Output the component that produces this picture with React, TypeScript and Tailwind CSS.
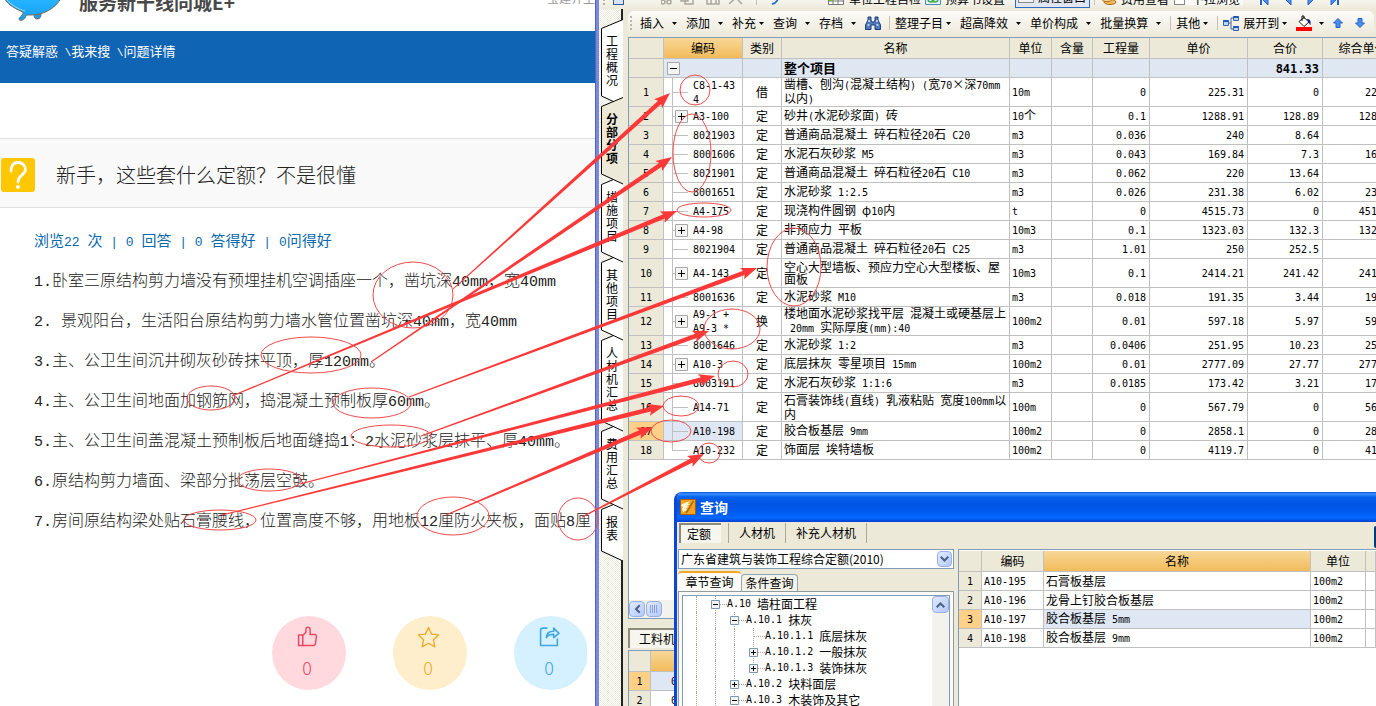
import clsx from "clsx";
import type { ReactNode } from "react";

type BudgetRow = {
  code: string;
  kind: string;
  name: string;
  unit: string;
  qty: string;
  price: string;
  total: string;
  composite: string;
  branch?: boolean;
  tall?: boolean;
};

const budgetRows: BudgetRow[] = [
  { code: "C8-1-43\n4", kind: "借", name: "凿槽、刨沟(混凝土结构) (宽70×深70mm\n以内)", unit: "10m", qty: "0", price: "225.31", total: "0", composite: "225.31", tall: true },
  { code: "A3-100", kind: "定", name: "砂井(水泥砂浆面) 砖", unit: "10个", qty: "0.1", price: "1288.91", total: "128.89", composite: "1288.91", branch: true },
  { code: "8021903", kind: "定", name: "普通商品混凝土 碎石粒径20石 C20", unit: "m3", qty: "0.036", price: "240", total: "8.64", composite: "" },
  { code: "8001606", kind: "定", name: "水泥石灰砂浆 M5", unit: "m3", qty: "0.043", price: "169.84", total: "7.3", composite: "169.84" },
  { code: "8021901", kind: "定", name: "普通商品混凝土 碎石粒径20石 C10", unit: "m3", qty: "0.062", price: "220", total: "13.64", composite: "" },
  { code: "8001651", kind: "定", name: "水泥砂浆 1:2.5", unit: "m3", qty: "0.026", price: "231.38", total: "6.02", composite: "231.38" },
  { code: "A4-175", kind: "定", name: "现浇构件圆钢 φ10内", unit: "t", qty: "0", price: "4515.73", total: "0", composite: "4515.73" },
  { code: "A4-98", kind: "定", name: "非预应力 平板", unit: "10m3", qty: "0.1", price: "1323.03", total: "132.3", composite: "1323.03", branch: true },
  { code: "8021904", kind: "定", name: "普通商品混凝土 碎石粒径20石 C25", unit: "m3", qty: "1.01", price: "250", total: "252.5", composite: "" },
  { code: "A4-143", kind: "定", name: "空心大型墙板、预应力空心大型楼板、屋\n面板", unit: "10m3", qty: "0.1", price: "2414.21", total: "241.42", composite: "2414.21", branch: true, tall: true },
  { code: "8001636", kind: "定", name: "水泥砂浆 M10", unit: "m3", qty: "0.018", price: "191.35", total: "3.44", composite: "191.35" },
  { code: "A9-1 +\nA9-3 *", kind: "换", name: "楼地面水泥砂浆找平层 混凝土或硬基层上\n 20mm 实际厚度(mm):40", unit: "100m2", qty: "0.01", price: "597.18", total: "5.97", composite: "597.18", branch: true, tall: true },
  { code: "8001646", kind: "定", name: "水泥砂浆 1:2", unit: "m3", qty: "0.0406", price: "251.95", total: "10.23", composite: "251.95" },
  { code: "A10-3", kind: "定", name: "底层抹灰 零星项目 15mm", unit: "100m2", qty: "0.01", price: "2777.09", total: "27.77", composite: "2777.09", branch: true },
  { code: "8003191", kind: "定", name: "水泥石灰砂浆 1:1:6", unit: "m3", qty: "0.0185", price: "173.42", total: "3.21", composite: "173.42" },
  { code: "A14-71", kind: "定", name: "石膏装饰线(直线) 乳液粘贴 宽度100mm以\n内", unit: "100m", qty: "0", price: "567.79", total: "0", composite: "567.79", tall: true },
  { code: "A10-198", kind: "定", name: "胶合板基层 9mm", unit: "100m2", qty: "0", price: "2858.1", total: "0", composite: "2858.1" },
  { code: "A10-232", kind: "定", name: "饰面层 埃特墙板", unit: "100m2", qty: "0", price: "4119.7", total: "0", composite: "4119.7" },
];

const quotaRows = [
  { code: "A10-195", name: "石膏板基层" },
  { code: "A10-196", name: "龙骨上钉胶合板基层" },
  { code: "A10-197", name: "胶合板基层 5mm" },
  { code: "A10-198", name: "胶合板基层 9mm" },
];

const questionLines = [
  "1.卧室三原结构剪力墙没有预埋挂机空调插座一个，凿坑深40mm，宽40mm",
  "2. 景观阳台，生活阳台原结构剪力墙水管位置凿坑深40mm，宽40mm",
  "3.主、公卫生间沉井砌灰砂砖抹平顶，厚120mm。",
  "4.主、公卫生间地面加钢筋网，捣混凝土预制板厚60mm。",
  "5.主、公卫生间盖混凝土预制板后地面缝捣1：2水泥砂浆层抹平、厚40mm。",
  "6.原结构剪力墙面、梁部分批荡层空鼓。",
  "7.房间原结构梁处贴石膏腰线，位置高度不够，用地板12厘防火夹板，面贴8厘",
];

const sideTabs = ["工程概况", "分部分项", "措施项目", "其他项目", "人材机汇总", "费用汇总", "报表"];

const treeNodes = [
  { depth: 0, mark: "-", label: "A.10 墙柱面工程" },
  { depth: 1, mark: "-", label: "A.10.1 抹灰" },
  { depth: 2, mark: "", label: "A.10.1.1 底层抹灰" },
  { depth: 2, mark: "+", label: "A.10.1.2 一般抹灰" },
  { depth: 2, mark: "+", label: "A.10.1.3 装饰抹灰" },
  { depth: 1, mark: "+", label: "A.10.2 块料面层" },
  { depth: 1, mark: "-", label: "A.10.3 木装饰及其它" },
];

const arrows = [
  [453, 289, 670, 93],
  [371, 362, 672, 157],
  [232, 396, 677, 211],
  [409, 397, 757, 268],
  [421, 436, 709, 331],
  [300, 484, 715, 376],
  [222, 515, 664, 406],
  [446, 515, 653, 427],
  [582, 517, 704, 454],
];

const ellipses = [
  [413, 295, 40, 33],
  [311, 355, 50, 18],
  [211, 398, 24, 12],
  [372, 403, 39, 15],
  [391, 436, 40, 11],
  [269, 480, 32, 11],
  [220, 520, 36, 10],
  [453, 516, 36, 19],
  [578, 519, 20, 21],
  [695, 90, 15, 15],
  [692, 153, 19, 39],
  [704, 210, 27, 7],
  [794, 267, 27, 39],
  [732, 329, 28, 20],
  [733, 374, 15, 13],
  [681, 406, 18, 10],
  [671, 431, 20, 11],
  [709, 453, 11, 10],
];

// Latin runs are set in a half-width face so they line up with the CJK grid
function Mixed({ text, latin = "font-['DejaVu_Sans_Mono',monospace] text-[10px]" }: { text: string; latin?: string }) {
  return (
    <>
      {text.split(/([\x20-\x7e]+)/).map((part, i) =>
        i % 2 ? (
          <span key={i} className={latin}>{part}</span>
        ) : (
          part
        ),
      )}
    </>
  );
}

function Logo() {
  return (
    <svg className="h-[22px] w-[62px] shrink-0" viewBox="0 0 62 22">
      <defs>
        <linearGradient id="bird" x1="0" y1="0" x2="0" y2="1">
          <stop offset="0" stopColor="#27b4ff" />
          <stop offset="1" stopColor="#14a0f5" />
        </linearGradient>
      </defs>
      <path d="M34 14c0 2 0 5 3 5 3 0 4-2 4-5z" fill="#1b9be8" stroke="#7d6b5d" />
      <path d="M4-2C9 6 16 9 23 12c1 3-4 5-4 7 0 2 4 2 6-1 1-2 1-3 3-3C43 16 56 8 61-2z" fill="url(#bird)" stroke="#7d6b5d" />
      <path d="M7 0c5 6 12 9 18 11" fill="none" stroke="#8fdcff" />
    </svg>
  );
}

function ForumPage() {
  const crumb = "font-['Liberation_Mono',monospace] text-[11px]";
  return (
    <section className="flex w-[595px] shrink-0 flex-col overflow-hidden bg-white">
      <header className="flex h-[31px] shrink-0 items-start justify-between overflow-hidden">
        <div className="flex items-start gap-[17px]">
          <Logo />
          <span className="-mt-2 text-[19px] leading-5 font-bold whitespace-nowrap text-[#484848]">服务新干线同城E+</span>
        </div>
        <span className="-mt-2 text-[12px] leading-3 text-[#999]">宝建齐主</span>
      </header>
      <nav className="flex h-[52px] shrink-0 items-start bg-[#1064b4] px-[6px] pt-3 text-[13px] leading-4 whitespace-pre text-white">
        <a href="#qa"><Mixed text="答疑解惑 " latin={crumb} /></a>
        <a href="#search"><Mixed text="\我来搜 " latin={crumb} /></a>
        <a href="#detail"><Mixed text="\问题详情" latin={crumb} /></a>
      </nav>
      <div className="mt-[55px] flex h-[70px] shrink-0 items-center gap-[21px] border-y border-[#e0e0e0] bg-[#f9f9f9] pt-1 pl-px">
        <svg className="size-[34px] shrink-0" viewBox="0 0 34 34">
          <rect width="34" height="34" rx="3" fill="#fec700" />
          <path d="M10 13c0-6 3-8.500 7-8.500s7.500 3 7.500 7c0 5-7.500 6-7.500 12.500" fill="none" stroke="#fff" strokeWidth="2.800" strokeLinecap="round" />
          <circle cx="17" cy="29" r="2" fill="#fff" />
        </svg>
        <h1 className="text-[20px] leading-6 font-light text-[#222]">新手，这些套什么定额？不是很懂</h1>
      </div>
      <p className="mt-5 ml-[34px] h-[31px] shrink-0 pt-[2px] text-[15px] leading-5 whitespace-pre text-[#0a69ad]">
        <Mixed text="浏览22 次 | 0 回答 | 0 答得好 | 0问得好" latin="font-['Liberation_Mono',monospace] text-[13px]" />
      </p>
      <div className="ml-[34px] shrink-0 text-[16px] leading-10 font-light whitespace-pre text-[#222]">
        {questionLines.map((line) => (
          <p key={line} className="h-10">
            <Mixed text={line} latin="font-['Liberation_Mono',monospace] text-[15px]" />
          </p>
        ))}
      </div>
      <div className="mt-[77px] mr-2 ml-[272px] flex gap-[47px] overflow-hidden text-[18px] leading-5 font-light">
        <button className="flex size-[74px] shrink-0 flex-col items-center gap-[10px] rounded-full bg-[#ffd9de] pt-[10px] pr-1 text-[#ee4560]">
          <svg className="size-[21px]" viewBox="0 0 20 20" fill="none" stroke="currentColor" strokeWidth="1.4" strokeLinejoin="round">
            <path d="M1.500 8.500h4v10h-4zM5.500 9l3-3V3c0-3 4-2 4 0v5h5c1 0 1 1 1 2l-1 7c0 1-1 1.500-2 1.500H5.500" />
          </svg>
          <span>0</span>
        </button>
        <button className="flex size-[74px] shrink-0 flex-col items-center gap-2 rounded-full bg-[#ffeecb] pt-[10px] pr-1 text-[#ecab2c]">
          <svg className="size-[23px]" viewBox="0 0 24 24" fill="none" stroke="currentColor" strokeWidth="1.4" strokeLinejoin="round">
            <path d="M12 1.500l3.200 7 7.300.800-5.400 5 1.500 7.500L12 18l-6.600 3.800 1.500-7.500-5.400-5 7.300-.8z" />
          </svg>
          <span>0</span>
        </button>
        <button className="flex size-[74px] shrink-0 flex-col items-center gap-[10px] rounded-full bg-[#d5f0ff] pt-[10px] pr-1 text-[#3ea7e4]">
          <svg className="size-[21px]" viewBox="0 0 20 20" fill="none" stroke="currentColor" strokeWidth="1.500" strokeLinejoin="round">
            <path d="M8 2H4C2 2 1.500 3 1.500 4v14.500h16V12" />
            <path d="M7 11c0-5 3-6 7-6V2l5 5-5 4V8c-3 0-5 0-7 3z" />
          </svg>
          <span>0</span>
        </button>
      </div>
    </section>
  );
}

function SideTabs() {
  return (
    <nav className="mt-[9px] w-[24px] shrink-0 border-r-2 border-[#222] bg-[repeating-conic-gradient(#fff_0_25%,#ece9d8_0_50%)] bg-size-[2px_2px] pt-[10px] pl-[2px]">
      {sideTabs.map((tab, i) => {
        const active = i === 1;
        const h = 26 + tab.length * 13;
        return (
          <button
            key={tab}
            className={clsx("relative -mb-[10px] grid w-[22px]", active && "font-bold")}
            style={{ zIndex: active ? 20 : 10 - i }}
          >
            <svg className="[grid-area:1/1]" width="22" height={h + 10} viewBox={`0 0 22 ${h + 10}`}>
              <path
                d={`M22 .5L.5 9.500V${h - 1}L22 ${h + 9}`}
                fill={active ? "#ece9d8" : "#fff"}
                stroke="#000"
              />
            </svg>
            <span className="mx-auto w-3 pt-[15px] text-[12px] leading-[13px] break-all [grid-area:1/1]">{tab}</span>
          </button>
        );
      })}
    </nav>
  );
}

function Caret() {
  return (
    <svg width="5" height="3" viewBox="0 0 5 3">
      <path d="M0 0h5L2.500 3z" />
    </svg>
  );
}

function ToolButton({ label, tight }: { label: string; tight?: boolean }) {
  return (
    <button className={clsx("flex shrink-0 items-center pr-[9px] whitespace-nowrap", tight ? "gap-[3px]" : "gap-2")}>
      {label}
      <Caret />
    </button>
  );
}

function Separator() {
  return <span className="mr-[5px] h-[14px] w-px shrink-0 bg-[#c5c2b4]" />;
}

function Grip() {
  return <span className="h-[14px] w-[2px] shrink-0 bg-[repeating-linear-gradient(#b9b6a6_0_2px,transparent_2px_4px)]" />;
}

function BlueArrow({ down }: { down?: boolean }) {
  return (
    <svg className={clsx("h-[10px] w-[10px] shrink-0", down && "rotate-180")} viewBox="0 0 10 10">
      <path d="M5 .5L9.500 5H7v4.500H3V5H.5z" fill="#4d8df0" stroke="#2563c8" />
    </svg>
  );
}

function NavArrow({ bar, flip }: { bar?: boolean; flip?: boolean }) {
  return (
    <svg className={clsx("h-3 w-3 shrink-0", flip && "-scale-x-100")} viewBox="0 0 12 12">
      <path d="M9 0v12L3 6z" fill="#4d8df0" stroke="#2563c8" />
      {bar && <path d="M1 0h2v12H1z" fill="#2563c8" />}
    </svg>
  );
}

// Upper toolbar row, scrolled mostly out of view
function UpperToolbar() {
  return (
    <div className="flex h-[10px] shrink-0 items-end overflow-hidden bg-gradient-to-b from-[#f6f5ee] to-[#ece9d8] pl-1 text-[12px] leading-3 whitespace-nowrap">
      <div className="mb-[5px] flex shrink-0 items-end">
        <Grip />
        <span className="ml-2 h-3 w-[11px] border border-[#315c9a] bg-[#d7e4f5]" />
        <span className="ml-[25px]"><Grip /></span>
        <svg className="ml-3 h-3 w-[86px]" viewBox="0 0 86 12" fill="none" stroke="#aaa79a" strokeWidth="1.500">
          <circle cx="2" cy="9" r="2" />
          <circle cx="8" cy="9" r="2" />
          <path d="M3 7l4-7M7 7L3 0M20 1h7v7h-7zM24 4h8v7h-8zM46 1h9v10h-9zM50 5h8v6h-8zM68 11L80 0M70 0l11 11" />
        </svg>
        <span className="ml-[9px] h-3 w-px bg-[#c5c2b4]" />
        <svg className="ml-3 h-3 w-3" viewBox="0 0 12 12">
          <path d="M3 11c5-1 6-4 6-10" fill="none" stroke="#2f73d8" strokeWidth="2" />
        </svg>
        <span className="ml-[42px]"><Grip /></span>
        <svg className="ml-[5px] h-3 w-4" viewBox="0 0 16 12">
          <path d="M.5.5h15v11H.5zM.5 4h15M.5 8h15M5 0v12M10 0v12" fill="#fff" stroke="#777" />
          <path d="M1 4h4v4H1z" fill="#78b82a" />
        </svg>
        <span className="ml-[5px]">单位工程自检</span>
        <svg className="ml-1 h-3 w-4" viewBox="0 0 16 12">
          <path d="M.5-2h15v13.500H.5z" fill="#e3f3ff" stroke="#4f87b7" />
          <circle cx="6" cy="6" r="3" fill="none" stroke="#3da84c" strokeWidth="1.500" />
          <circle cx="10" cy="6" r="3" fill="none" stroke="#3da84c" strokeWidth="1.500" />
        </svg>
        <span className="ml-1">预算书设置</span>
      </div>
      <button className="mb-[2px] ml-[10px] flex h-5 w-[75px] shrink-0 items-end gap-1 border border-[#316ac5] bg-[#e1e6f0] px-[2px] pb-1">
        <span className="h-3 w-4 border border-[#888] bg-[#f3f3f3]" />
        属性窗口
      </button>
      <div className="mb-[5px] flex shrink-0 items-end">
        <span className="ml-1 h-3 w-px bg-[#c5c2b4]" />
        <svg className="ml-[6px] h-3 w-4" viewBox="0 0 16 12">
          <ellipse cx="9" cy="9" rx="6" ry="2.500" fill="#f3b95c" stroke="#a76a1c" />
          <ellipse cx="6" cy="6" rx="5" ry="2.500" fill="#ffd989" stroke="#a76a1c" />
        </svg>
        <span className="ml-1">费用查看</span>
        <label className="ml-[5px] flex items-end gap-[7px] bg-[#fafafa] pr-[3px]">
          <input type="checkbox" className="size-[11px] appearance-none border border-[#8a897f] bg-white" />
          下拉浏览
        </label>
        <span className="ml-2"><Grip /></span>
        <span className="ml-2 flex gap-[11px]">
          <NavArrow bar />
          <NavArrow />
          <NavArrow flip />
          <NavArrow bar flip />
        </span>
        <span className="ml-[10px]"><Grip /></span>
      </div>
    </div>
  );
}

function MainToolbar() {
  return (
    <div className="mr-[2px] flex h-[26px] shrink-0 items-center overflow-hidden rounded-md bg-gradient-to-b from-[#fcfbf8] to-[#ece9d8] pb-[2px] pl-[2px] text-[12px] leading-4">
      <Grip />
      <div className="ml-2 flex items-center">
        <ToolButton label="插入" />
        <ToolButton label="添加" />
        <ToolButton label="补充" tight />
        <ToolButton label="查询" />
        <ToolButton label="存档" />
        <svg className="mr-2 h-[14px] w-4 shrink-0" viewBox="0 0 16 14">
          <path d="M3 1h3v3l1 2h2l1-2V1h3v3l2.500 5v4.500H10V9H6v4.500H.5V9L3 4z" fill="#4f79b8" stroke="#1e3f7c" />
          <path d="M2.500 9h2M11.500 9h2M4 4v2M12 4v2" stroke="#cfe2ff" strokeWidth="1.500" />
        </svg>
        <Separator />
        <ToolButton label="整理子目" tight />
        <ToolButton label="超高降效" />
        <ToolButton label="单价构成" />
        <ToolButton label="批量换算" />
        <Separator />
        <ToolButton label="其他" tight />
        <Separator />
        <svg className="mr-1 h-[15px] w-4 shrink-0" viewBox="0 0 16 15">
          <path d="M5 7h3M8 2v11M8 2h3M8 13h3" stroke="#3b64a8" fill="none" />
          <path d="M.5 4.500h5v5h-5zM10.500.5h5v4h-5zM10.500 10.500h5v4h-5z" fill="#bcd6f7" stroke="#3b64a8" />
          <path d="M.5 5h5M10.500 1h5M10.500 11h5" stroke="#2257b8" strokeWidth="2" />
        </svg>
        <ToolButton label="展开到" tight />
        <button aria-label="填充颜色" className="flex shrink-0 items-center gap-[7px] pr-[9px]">
          <svg className="h-4 w-4" viewBox="0 0 16 16">
            <path d="M3 6.500l5-4 5 4.500-5 4.500z" fill="#fff" stroke="#111" />
            <path d="M6 6V1h2v3" fill="none" stroke="#111" />
            <path d="M11 4c3 0 4 2 3.500 6-1 0-1-2-2.500-4z" fill="#10188a" />
            <path d="M0 12h16v4H0z" fill="#f00" />
          </svg>
          <Caret />
        </button>
        <button aria-label="上移" className="mr-3 flex"><BlueArrow /></button>
        <button aria-label="下移" className="flex"><BlueArrow down /></button>
      </div>
    </div>
  );
}

const cell = "border-r border-b border-[#c0c0c0] p-0 whitespace-pre";
const headCell = "h-[21px] border-r border-b border-[#c0c0c0] bg-[#ece9d8] p-0 font-normal whitespace-nowrap";
const orangeHead = "bg-gradient-to-b from-[#f8d796] to-[#f2bb5a]";

function Expander({ minus }: { minus?: boolean }) {
  return (
    <svg className="size-[13px] shrink-0" viewBox="0 0 13 13">
      <path d="M.5.5h12v12H.5z" fill="#f4f4f2" stroke="#a8a8a8" />
      <path d={minus ? "M3 6.500h7" : "M3 6.500h7M6.500 3v7"} stroke="#000" />
    </svg>
  );
}

function CodeCell({ row, last }: { row: BudgetRow; last: boolean }) {
  return (
    <div className={clsx("flex items-center pl-2", row.tall ? "h-7" : "h-[18px]")}>
      <div className="grid h-full w-4 shrink-0 items-center justify-items-end">
        <div className="flex h-full w-full flex-col [grid-area:1/1]">
          <span className="flex-1 border-b border-l border-[#c0c0c0]" />
          <span className={clsx("flex-1 border-[#c0c0c0]", !last && "border-l")} />
        </div>
        {row.branch && <span className="[grid-area:1/1]"><Expander /></span>}
      </div>
      <span className="pl-[5px]"><Mixed text={row.code} /></span>
    </div>
  );
}

function BudgetTable() {
  const numeric = clsx(cell, "pr-[3px] text-right");
  return (
    <table className="w-[774px] table-fixed border-separate border-spacing-0 text-[12px] leading-3">
      <colgroup>
        <col className="w-[35px]" />
        <col className="w-[79px]" />
        <col className="w-[39px]" />
        <col className="w-[228px]" />
        <col className="w-[42px]" />
        <col className="w-[41px]" />
        <col className="w-[57px]" />
        <col className="w-[98px]" />
        <col className="w-[75px]" />
        <col className="w-[80px]" />
      </colgroup>
      <thead>
        <tr>
          <th className={headCell} />
          <th className={clsx(headCell, orangeHead)}>编码</th>
          {["类别", "名称", "单位", "含量", "工程量", "单价", "合价", "综合单价"].map((h) => (
            <th key={h} className={headCell}>{h}</th>
          ))}
        </tr>
      </thead>
      <tbody>
        <tr className="h-[19px] bg-[#dfe7f2] font-bold">
          <td className={clsx(cell, "bg-[#ece9d8]")} />
          <td className={cell}><div className="flex pl-[3px]"><Expander minus /></div></td>
          <td className={cell} />
          <td className={clsx(cell, "pl-[2px] text-[13px]")}>整个项目</td>
          <td className={cell} />
          <td className={cell} />
          <td className={cell} />
          <td className={cell} />
          <td className={numeric}><Mixed text="841.33" latin="font-['DejaVu_Sans_Mono',monospace] text-[12px]" /></td>
          <td className={cell} />
        </tr>
        {budgetRows.map((row, i) => {
          const selected = i === 16;
          return (
            <tr key={i} className={row.tall ? "h-[29px]" : "h-[19px]"}>
              <td className={clsx(cell, "text-center", selected ? "bg-[#ffd088]" : "bg-[#ece9d8]")}>
                <Mixed text={String(i + 1)} />
              </td>
              <td className={clsx(cell, selected && "bg-[#dfe7f5]")}>
                <CodeCell row={row} last={i === budgetRows.length - 1} />
              </td>
              <td className={clsx(cell, "text-center")}>{row.kind}</td>
              <td className={clsx(cell, "pl-[2px]")}><Mixed text={row.name} /></td>
              <td className={clsx(cell, "pl-[2px]")}><Mixed text={row.unit} /></td>
              <td className={cell} />
              <td className={numeric}><Mixed text={row.qty} /></td>
              <td className={numeric}><Mixed text={row.price} /></td>
              <td className={numeric}><Mixed text={row.total} /></td>
              <td className={clsx(cell, "pr-px text-right")}><Mixed text={row.composite} /></td>
            </tr>
          );
        })}
      </tbody>
    </table>
  );
}

function XpButton({ label, children, className }: { label: string; children: ReactNode; className?: string }) {
  return (
    <button
      aria-label={label}
      className={clsx("flex shrink-0 items-center justify-center rounded-sm border border-[#98b1e4] bg-gradient-to-br from-[#e1eafe] to-[#b4c8f8]", className)}
    >
      {children}
    </button>
  );
}

function Chevron({ className }: { className?: string }) {
  return (
    <svg className={clsx("h-[6px] w-[9px]", className)} viewBox="0 0 9 6">
      <path d="M.7.7l3.800 3.800L8.300.7" fill="none" stroke="#4d6185" strokeWidth="2" />
    </svg>
  );
}

function TreePanel() {
  return (
    <div className="flex flex-1 overflow-hidden border border-b-0 border-[#7f9db9] bg-white">
      <ul className="flex-1 text-[12px] leading-4 whitespace-pre">
        {treeNodes.map((node) => (
          <li key={node.label} className="flex h-4 items-center pl-[13px]">
            {Array.from({ length: node.depth + 1 }, (_, i) => (
              <span key={i} className="h-4 w-[19px] shrink-0 border-l border-dotted border-[#aca899]" />
            ))}
            <svg className="-ml-1 h-4 w-4 shrink-0" viewBox="0 0 16 16">
              <path d="M5 8.500h11" stroke="#aca899" strokeDasharray="1 1" />
              <path d="M4.500 0v16" stroke="#aca899" strokeDasharray="1 1" />
              {node.mark && (
                <>
                  <path d="M.5 4.500h8v8h-8z" fill="#f5f4ef" stroke="#7898b5" />
                  <path d={node.mark === "+" ? "M2 8.500h5M4.500 6v5" : "M2 8.500h5"} stroke="#000" />
                </>
              )}
            </svg>
            <Mixed text={node.label} />
          </li>
        ))}
      </ul>
      <div className="flex w-[17px] flex-col bg-[#f3f2ec]">
        <XpButton label="向上滚动" className="h-[17px]"><Chevron className="rotate-180" /></XpButton>
      </div>
    </div>
  );
}

function QuotaTable() {
  return (
    <table className="w-full table-fixed border-separate border-spacing-0 text-[12px] leading-3">
      <colgroup>
        <col className="w-[23px]" />
        <col className="w-[62px]" />
        <col />
        <col className="w-[55px]" />
        <col className="w-[10px]" />
      </colgroup>
      <thead>
        <tr>
          <th className={headCell} />
          <th className={headCell}>编码</th>
          <th className={clsx(headCell, orangeHead)}>名称</th>
          <th className={headCell}>单位</th>
          <th className={headCell} />
        </tr>
      </thead>
      <tbody>
        {quotaRows.map((row, i) => (
          <tr key={row.code} className="h-[19px]">
            <td className={clsx(cell, "text-center", i === 2 ? "bg-[#ffd088]" : "bg-[#ece9d8]")}><Mixed text={String(i + 1)} /></td>
            <td className={clsx(cell, "pl-[2px]")}><Mixed text={row.code} /></td>
            <td className={clsx(cell, "pl-[2px]", i === 2 && "bg-[#dfe7f5]")}><Mixed text={row.name} /></td>
            <td className={clsx(cell, "pl-[2px]")}><Mixed text="100m2" /></td>
            <td className={cell} />
          </tr>
        ))}
      </tbody>
    </table>
  );
}

function QueryDialog() {
  return (
    <div role="dialog" aria-label="查询" className="absolute top-[492px] right-0 bottom-0 left-[75px] flex flex-col overflow-hidden rounded-tl-lg border-l-[3px] border-[#0a46d8] bg-[#ece9d8]">
      <header className="flex h-[30px] shrink-0 items-center gap-1 bg-[linear-gradient(#0a50d8,#3a92ff_2px,#0560ee_5px,#0054e3_12px,#0058ee_18px,#0368ff_26px,#0040d0)] pl-[3px]">
        <svg className="size-4" viewBox="0 0 16 16">
          <path d="M.5.5h15v15H.5z" fill="#f2a51c" stroke="#a85d0a" />
          <path d="M2 5l8-3-2 3 2 0-3 2 2 1-3 1 1 2-4 2-1-3 1-2-2-1z" fill="#fff6d8" />
          <path d="M13.500 2L8 11l-2 3" stroke="#b4640c" strokeWidth="1.500" fill="none" />
        </svg>
        <h2 className="text-[14px] leading-4 font-bold text-white">查询</h2>
      </header>
      <div className="flex h-[27px] shrink-0 items-start justify-between">
        <div className="flex h-[21px] items-center text-[12px] leading-4">
          <button className="ml-[2px] h-5 w-[42px] border-t-2 border-l-2 border-[#8c8a7c] bg-[#f6f5ee] pr-1">定额</button>
          <span className="ml-[7px] h-5 w-px bg-[#aca899]" />
          <button className="w-14">人材机</button>
          <span className="h-5 w-px bg-[#aca899]" />
          <button className="w-20">补充人材机</button>
          <span className="h-5 w-px bg-[#aca899]" />
        </div>
        <button aria-label="更多" className="mt-1 h-[22px] w-[2px] rounded-l-sm border-l-2 border-[#003c74] bg-white" />
      </div>
      <div className="flex flex-1 overflow-hidden">
        <div className="flex w-[281px] shrink-0 flex-col pr-1 pl-px">
          <div className="flex h-5 shrink-0 items-center border border-[#7f9db9] bg-white pr-px">
            <select aria-label="定额库" className="h-4 min-w-0 flex-1 appearance-none bg-white pl-[2px] text-[12px] leading-4 outline-none">
              <option>广东省建筑与装饰工程综合定额(2010)</option>
            </select>
            <XpButton label="展开列表" className="h-4 w-[15px]"><Chevron /></XpButton>
          </div>
          <div className="mt-[2px] flex h-[20px] shrink-0 items-end text-[12px] leading-4">
            <button className="h-5 w-[63px] rounded-t border-t-2 border-[#f5a623] bg-[#fbfaf6]">章节查询</button>
            <button className="h-[17px] w-[57px] rounded-t border border-b-0 border-[#91a7b4] bg-[#f4f3ea]">条件查询</button>
          </div>
          <div className="flex flex-1 flex-col overflow-hidden border border-b-0 border-[#919b9c] bg-[#fbfaf6] px-[3px] pt-[3px]">
            <TreePanel />
          </div>
        </div>
        <div className="flex-1 overflow-hidden border-t border-l border-[#7f9db9] bg-white pt-px">
          <QuotaTable />
        </div>
      </div>
    </div>
  );
}

function LowerPanel() {
  return (
    <div className="flex h-[87px] shrink-0 flex-col pt-[9px]">
      <button className="h-5 w-20 border-t-2 border-l-2 border-[#8c8a7c] bg-[#f6f5ee] text-[12px] leading-4">工料机显示</button>
      <div className="mt-[2px] flex-1 overflow-hidden border-t border-l border-[#7f9db9] bg-white">
        <table className="w-[120px] table-fixed border-separate border-spacing-0 text-[12px] leading-3">
          <thead>
            <tr>
              <th className={clsx(headCell, "w-[22px]")} />
              <th className={clsx(headCell, orangeHead)} />
            </tr>
          </thead>
          <tbody>
            {["1", "2"].map((n) => (
              <tr key={n} className="h-[19px]">
                <td className={clsx(cell, "text-center", n === "1" ? "bg-[#ffd088]" : "bg-[#ece9d8]")}><Mixed text={n} /></td>
                <td className={clsx(cell, "pl-5", n === "1" && "bg-[#dfe7f5]")}><Mixed text="0001" /></td>
              </tr>
            ))}
          </tbody>
        </table>
      </div>
    </div>
  );
}

function BudgetApp() {
  return (
    <section className="relative flex min-w-0 flex-1 flex-col bg-[#ece9d8]">
      <UpperToolbar />
      <div className="-mt-[10px] flex min-h-0 flex-1">
        <SideTabs />
        <div className="mt-[11px] ml-[5px] flex min-w-0 flex-1 flex-col">
          <MainToolbar />
          <div className="flex min-h-0 flex-1 flex-col overflow-hidden border border-r-0 border-[#7f9db9] bg-white">
            <div className="flex-1 overflow-hidden">
              <BudgetTable />
            </div>
            <div className="flex h-[18px] shrink-0 items-center gap-px bg-[#f3f2ec]">
              <XpButton label="向左滚动" className="size-4"><Chevron className="rotate-90" /></XpButton>
              <XpButton label="滚动条" className="size-4">
                <svg className="size-2" viewBox="0 0 8 8"><path d="M.5 0v8M2.500 0v8M4.500 0v8M6.500 0v8" stroke="#8ba4dd" /></svg>
              </XpButton>
            </div>
          </div>
          <LowerPanel />
        </div>
      </div>
      <QueryDialog />
    </section>
  );
}

// Lines widen from the start point to the arrow head
function arrowPoints([x1, y1, x2, y2]: number[]) {
  const len = Math.hypot(x2 - x1, y2 - y1);
  const ux = (x2 - x1) / len;
  const uy = (y2 - y1) / len;
  const at = (along: number, side: number) => `${x1 + ux * along - uy * side},${y1 + uy * along + ux * side}`;
  return [at(0, 0.5), at(len - 14, 2.3), at(len - 16, 6), at(len, 0), at(len - 16, -6), at(len - 14, -2.3), at(0, -0.5)].join(" ");
}

function Annotations() {
  return (
    <svg className="pointer-events-none absolute top-0 left-0 z-50" width="840" height="560" viewBox="0 0 840 560">
      {arrows.map((a, i) => (
        <polygon key={i} points={arrowPoints(a)} fill="#fd3838" />
      ))}
      {ellipses.map(([cx, cy, rx, ry], i) => (
        <ellipse key={i} cx={cx} cy={cy} rx={rx} ry={ry} fill="none" stroke="#f04a4a" />
      ))}
    </svg>
  );
}

export default function App() {
  return (
    <main className="relative flex h-screen w-full overflow-hidden bg-white font-['Noto_Sans_CJK_SC',sans-serif] text-black">
      <ForumPage />
      <div className="w-1 shrink-0 border-l border-[#5660b8] bg-[#7b88e0]" />
      <BudgetApp />
      <Annotations />
    </main>
  );
}
